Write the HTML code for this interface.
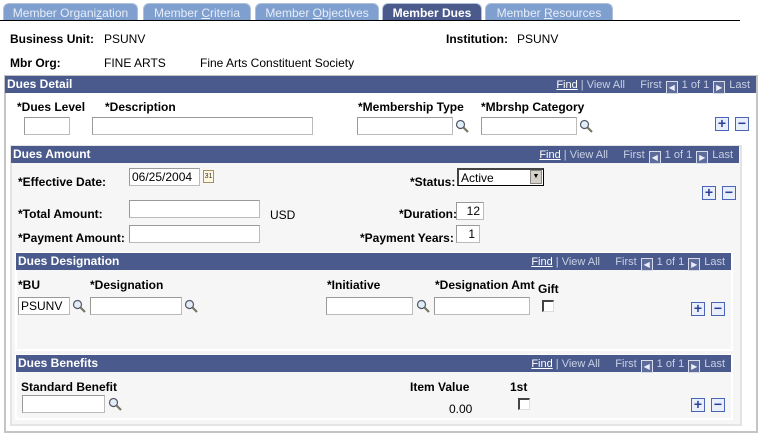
<!DOCTYPE html>
<html><head><style>
*{margin:0;padding:0;box-sizing:border-box}
body{width:759px;height:437px;background:#fff;position:relative;overflow:hidden;font-family:"Liberation Sans",Arial,sans-serif;font-size:12px;color:#000}
div,span{position:absolute}
.tab{top:3px;height:18px;border-radius:6px 6px 0 0;background:#7f9fcf;color:#e6edf8;font-size:12px;text-align:center;line-height:18px;border:1px solid #b0c0d8;border-bottom:none}
.act{background:#4a5a8c;color:#fff;font-weight:bold}
.b{font-weight:bold;white-space:nowrap;line-height:14px}
.t{white-space:nowrap;line-height:14px}
.hdr{background:#4a5a8c;color:#fff;font-weight:bold;height:17px;line-height:17px;padding-left:2px}
.nav{right:6px;top:0;font-weight:normal;font-size:11px;color:#c8d0e4;line-height:19px;white-space:nowrap}
.nav u{color:#fff}
.arr{display:inline-block;position:static;width:12px;height:13px;border:1px solid #d8dce8;background:#5d6c9a;vertical-align:-2px;margin:0 4px;font-size:8px;line-height:11px;text-align:center;color:#e8ecf4}
.in{background:#fff;border:1px solid #bbb;border-top-color:#999;border-left-color:#999;height:18px;font-size:12px;line-height:16px;padding-left:2px}
.mag{width:14px;height:14px}
.pm{width:14px;height:14px;border:1px solid #4a64b8;background:#e8eefa;color:#2a3f9a;font-weight:bold;font-size:14px;line-height:11px;text-align:center}
.cb{width:12px;height:12px;background:#fff;border:1px solid #777;border-right-color:#ddd;border-bottom-color:#ddd;border-top:2px solid #444;border-left:2px solid #444}
</style></head><body>
<div class="tab" style="left:3px;width:135px">Member Organi<u>z</u>ation</div>
<div class="tab" style="left:143px;width:108px">Member <u>C</u>riteria</div>
<div class="tab" style="left:255px;width:124px">Member <u>O</u>bjectives</div>
<div class="tab act" style="left:382px;width:100px">Member Dues</div>
<div class="tab" style="left:485px;width:128px">Member <u>R</u>esources</div>
<div style="left:0;top:20px;width:740px;height:1px;background:#000"></div>

<div class="b" style="left:10px;top:32px">Business Unit:</div>
<div class="t" style="left:104px;top:32px">PSUNV</div>
<div class="b" style="left:446px;top:32px">Institution:</div>
<div class="t" style="left:517px;top:32px">PSUNV</div>
<div class="b" style="left:10px;top:56px">Mbr Org:</div>
<div class="t" style="left:104px;top:56px">FINE ARTS</div>
<div class="t" style="left:200px;top:56px">Fine Arts Constituent Society</div>

<div style="left:4px;top:75px;width:754px;height:358px;border:2px solid #c4c4c4;background:#fff"></div>
<div class="hdr" style="left:5px;top:76px;width:751px">Dues Detail<span class="nav"><u>Find</u> | View All &nbsp;&nbsp;&nbsp; First<span class="arr">◀</span>1 of 1<span class="arr">▶</span>Last</span></div>
<div class="b" style="left:17px;top:100px">*Dues Level</div>
<div class="b" style="left:105px;top:100px">*Description</div>
<div class="b" style="left:358px;top:100px">*Membership Type</div>
<div class="b" style="left:481px;top:100px">*Mbrshp Category</div>
<div class="in" style="left:24px;top:117px;width:46px"></div>
<div class="in" style="left:92px;top:117px;width:221px"></div>
<div class="in" style="left:357px;top:117px;width:96px"></div>
<svg class="mag" style="position:absolute;left:455px;top:119px" viewBox="0 0 14 14"><circle cx="5.5" cy="5.5" r="4" fill="#dfeef8" stroke="#556" stroke-width="1.2"/><path d="M8.5 8.5L13 13" stroke="#776" stroke-width="2.2"/></svg>
<div class="in" style="left:481px;top:117px;width:96px"></div>
<svg class="mag" style="position:absolute;left:579px;top:119px" viewBox="0 0 14 14"><circle cx="5.5" cy="5.5" r="4" fill="#dfeef8" stroke="#556" stroke-width="1.2"/><path d="M8.5 8.5L13 13" stroke="#776" stroke-width="2.2"/></svg>
<div class="pm" style="left:715px;top:117px">+</div><div class="pm" style="left:735px;top:117px">−</div>

<div style="left:10px;top:145px;width:732px;height:281px;border:2px solid #e4e4e4;background:#f6f6f6"></div>
<div class="hdr" style="left:11px;top:146px;width:728px">Dues Amount<span class="nav"><u>Find</u> | View All &nbsp;&nbsp;&nbsp; First<span class="arr">◀</span>1 of 1<span class="arr">▶</span>Last</span></div>
<div class="b" style="left:18px;top:175px">*Effective Date:</div>
<div class="in" style="left:129px;top:168px;width:71px">06/25/2004</div>
<div style="left:203px;top:170px;width:11px;height:13px;border:1px solid #a89060;background:#fff8e0;font-size:7px;line-height:11px;text-align:center;color:#333">31</div>
<div class="b" style="left:410px;top:175px">*Status:</div>
<div class="in" style="left:457px;top:168px;width:87px;border:1px solid #000;border-top:2px solid #444;border-left:2px solid #444">Active<span style="right:1px;top:0;width:12px;height:14px;background:#d4d0c8;border:1px solid #888;font-size:7px;text-align:center;line-height:12px">▼</span></div>
<div class="pm" style="left:702px;top:186px">+</div><div class="pm" style="left:722px;top:186px">−</div>
<div class="b" style="left:18px;top:207px">*Total Amount:</div>
<div class="in" style="left:129px;top:200px;width:131px"></div>
<div class="t" style="left:270px;top:208px">USD</div>
<div class="b" style="left:399px;top:207px">*Duration:</div>
<div class="in" style="left:456px;top:202px;width:28px;text-align:right;padding-right:3px">12</div>
<div class="b" style="left:18px;top:231px">*Payment Amount:</div>
<div class="in" style="left:129px;top:225px;width:131px"></div>
<div class="b" style="left:360px;top:231px">*Payment Years:</div>
<div class="in" style="left:456px;top:225px;width:24px;text-align:right;padding-right:4px">1</div>

<div style="left:15px;top:252px;width:718px;height:99px;border:2px solid #fff"></div>
<div class="hdr" style="left:16px;top:253px;width:715px">Dues Designation<span class="nav"><u>Find</u> | View All &nbsp;&nbsp;&nbsp; First<span class="arr">◀</span>1 of 1<span class="arr">▶</span>Last</span></div>
<div class="b" style="left:18px;top:278px">*BU</div>
<div class="b" style="left:90px;top:278px">*Designation</div>
<div class="b" style="left:327px;top:278px">*Initiative</div>
<div class="b" style="left:435px;top:278px">*Designation Amt</div>
<div class="b" style="left:538px;top:282px">Gift</div>
<div class="in" style="left:18px;top:297px;width:52px">PSUNV</div>
<svg class="mag" style="position:absolute;left:72px;top:299px" viewBox="0 0 14 14"><circle cx="5.5" cy="5.5" r="4" fill="#dfeef8" stroke="#556" stroke-width="1.2"/><path d="M8.5 8.5L13 13" stroke="#776" stroke-width="2.2"/></svg>
<div class="in" style="left:90px;top:297px;width:92px"></div>
<svg class="mag" style="position:absolute;left:184px;top:299px" viewBox="0 0 14 14"><circle cx="5.5" cy="5.5" r="4" fill="#dfeef8" stroke="#556" stroke-width="1.2"/><path d="M8.5 8.5L13 13" stroke="#776" stroke-width="2.2"/></svg>
<div class="in" style="left:326px;top:297px;width:87px"></div>
<svg class="mag" style="position:absolute;left:416px;top:299px" viewBox="0 0 14 14"><circle cx="5.5" cy="5.5" r="4" fill="#dfeef8" stroke="#556" stroke-width="1.2"/><path d="M8.5 8.5L13 13" stroke="#776" stroke-width="2.2"/></svg>
<div class="in" style="left:434px;top:297px;width:96px"></div>
<div class="cb" style="left:542px;top:300px"></div>
<div class="pm" style="left:691px;top:302px">+</div><div class="pm" style="left:711px;top:302px">−</div>

<div style="left:15px;top:354px;width:718px;height:66px;border:2px solid #fff"></div>
<div class="hdr" style="left:16px;top:355px;width:715px">Dues Benefits<span class="nav"><u>Find</u> | View All &nbsp;&nbsp;&nbsp; First<span class="arr">◀</span>1 of 1<span class="arr">▶</span>Last</span></div>
<div class="b" style="left:21px;top:380px">Standard Benefit</div>
<div class="b" style="left:410px;top:380px">Item Value</div>
<div class="b" style="left:510px;top:380px">1st</div>
<div class="in" style="left:22px;top:395px;width:83px"></div>
<svg class="mag" style="position:absolute;left:108px;top:397px" viewBox="0 0 14 14"><circle cx="5.5" cy="5.5" r="4" fill="#dfeef8" stroke="#556" stroke-width="1.2"/><path d="M8.5 8.5L13 13" stroke="#776" stroke-width="2.2"/></svg>
<div class="t" style="left:449px;top:402px">0.00</div>
<div class="cb" style="left:518px;top:398px"></div>
<div class="pm" style="left:691px;top:398px">+</div><div class="pm" style="left:711px;top:398px">−</div>
</body></html>
